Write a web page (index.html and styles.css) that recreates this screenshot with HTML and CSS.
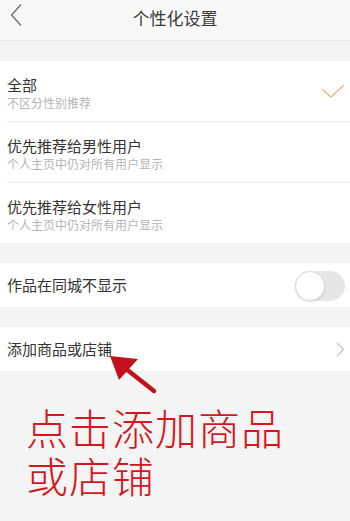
FILE: index.html
```html
<!DOCTYPE html>
<html lang="zh">
<head>
<meta charset="utf-8">
<link rel="stylesheet" href="styles.css">
</head>
<body>
<div class="page">
  <header class="topbar">
    <svg class="back" width="14" height="24" viewBox="0 0 14 24"><polyline points="11,1.5 1.5,12 11,22.5" fill="none" stroke="#666" stroke-width="1.2"/></svg>
    <div class="title">个性化设置</div>
  </header>

  <section class="group first">
    <div class="row two">
      <div class="texts">
        <div class="main">全部</div>
        <div class="sub">不区分性别推荐</div>
      </div>
      <svg class="check" width="24" height="16" viewBox="0 0 24 16"><polyline points="1,5 10,13 23,1" fill="none" stroke="#f3b68a" stroke-width="1.3"/></svg>
    </div>
    <div class="row two">
      <div class="texts">
        <div class="main">优先推荐给男性用户</div>
        <div class="sub">个人主页中仍对所有用户显示</div>
      </div>
    </div>
    <div class="row two last">
      <div class="texts">
        <div class="main">优先推荐给女性用户</div>
        <div class="sub">个人主页中仍对所有用户显示</div>
      </div>
    </div>
  </section>

  <section class="group">
    <div class="row one last">
      <div class="main">作品在同城不显示</div>
      <div class="toggle"><div class="knob"></div></div>
    </div>
  </section>

  <section class="group">
    <div class="row one last">
      <div class="main">添加商品或店铺</div>
      <svg class="chev" width="9" height="15" viewBox="0 0 9 15"><polyline points="1,1 7.5,7.5 1,14" fill="none" stroke="#c4c4c4" stroke-width="1.2"/></svg>
    </div>
  </section>

  <div class="note">
    <div class="note-line">点击添加商品</div>
    <div class="note-line">或店铺</div>
  </div>

  <svg class="arrow" width="60" height="45" viewBox="0 0 60 45">
    <line x1="8" y1="7" x2="46" y2="37" stroke="#c3121b" stroke-width="4.5" stroke-linecap="round"/>
    <polygon points="2,2 30,5 11,26" fill="#c3121b"/>
  </svg>
</div>
</body>
</html>
```
FILE: styles.css
```css
* { box-sizing: border-box; margin: 0; padding: 0; }
html, body { background: #f4f4f4; }
body {
  width: 350px;
  height: 521px;
  overflow: hidden;
  font-family: "Noto Sans CJK SC", "Noto Sans", sans-serif;
  color: #333;
}
.page { position: relative; width: 350px; height: 521px; }
.topbar {
  position: relative;
  height: 41px;
  background: #f8f8f8;
  border-bottom: 1px solid #e9e9e9;
  display: flex;
  align-items: center;
  justify-content: center;
}
.back { position: absolute; left: 10px; top: 3px; }
.title { font-size: 17px; line-height: 20px; color: #3a3a3a; margin-top: -4px; }
.group { background: #fff; margin-top: 20px; }
.row {
  display: flex;
  align-items: center;
  justify-content: space-between;
  margin-left: 7px;
  padding-right: 5px;
  border-bottom: 1px solid #ededed;
}
.row.last { border-bottom: none; }
.row.two { height: 61px; align-items: flex-start; padding-top: 15px; }
.row.two.last { height: 60px; }
.row.one { height: 44px; }
.main { font-size: 15px; line-height: 18px; color: #333; }
.sub { font-size: 12px; line-height: 15px; color: #b5b5b5; margin-top: 1px; }
.check { margin-top: 8px; }
.toggle {
  width: 50px;
  height: 30px;
  border-radius: 15px;
  background: #e6e6e6;
  display: flex;
  align-items: center;
  margin-top: 1px;
}
.knob {
  width: 30px;
  height: 30px;
  border-radius: 50%;
  background: #fff;
  border: 1px solid #dcdcdc;
  box-shadow: 0 1px 2px rgba(0,0,0,0.12);
}
.note {
  margin-top: 36px;
  padding-left: 26px;
  font-family: "Liberation Sans", "Noto Sans CJK SC", sans-serif;
  font-size: 42px;
  font-weight: 300;
  line-height: 48px;
  letter-spacing: 1px;
  color: #d8141c;
}
.note-line { height: 48px; }
.arrow { position: absolute; left: 108px; top: 354px; }
```
